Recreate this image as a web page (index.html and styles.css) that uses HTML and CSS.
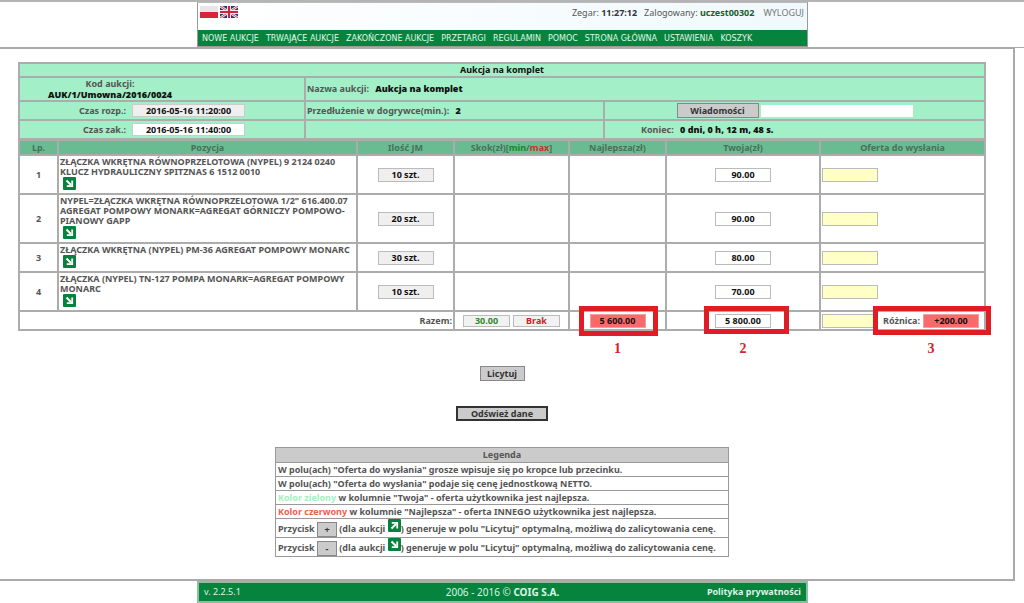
FILE: index.html
```html
<!DOCTYPE html>
<html lang="pl">
<head>
<meta charset="utf-8">
<title>Aukcja na komplet</title>
<link rel="stylesheet" href="styles.css">
</head>
<body>
<svg class="sprite" aria-hidden="true">
  <symbol id="arrow-down" viewBox="0 0 13 13">
    <rect width="13" height="13" rx="1" fill="#08813e"/>
    <path d="M3.5 3.5 L8 8" stroke="#fff" stroke-width="2" fill="none"/>
    <path d="M9.2 3.5 V9.2 H3.8" stroke="#fff" stroke-width="1.8" fill="none"/>
  </symbol>
  <symbol id="arrow-up" viewBox="0 0 13 13">
    <rect width="13" height="13" rx="1" fill="#08813e"/>
    <path d="M3.5 9.5 L8 5" stroke="#fff" stroke-width="2" fill="none"/>
    <path d="M3.8 3.8 H9.2 V9.4" stroke="#fff" stroke-width="1.8" fill="none"/>
  </symbol>
</svg>

<header class="top">
  <div class="top-box">
    <div class="top-bar">
      <div class="flags">
        <a href="#pl" aria-label="Polski"><svg class="flag" viewBox="0 0 18 12"><rect width="18" height="6" fill="#e9e6e6"/><rect y="6" width="18" height="6" fill="#d5263d"/></svg></a>
        <a href="#en" aria-label="English"><svg class="flag" viewBox="0 0 18 12"><rect width="18" height="12" fill="#2c3570"/><path d="M0 0 L18 12 M18 0 L0 12" stroke="#eee" stroke-width="2.6"/><path d="M0 0 L18 12 M18 0 L0 12" stroke="#cf3450" stroke-width="0.9"/><path d="M9 0 V12 M0 6 H18" stroke="#eee" stroke-width="4"/><path d="M9 0 V12 M0 6 H18" stroke="#cf2440" stroke-width="2.2"/></svg></a>
      </div>
      <div class="session">
        <span>Zegar: <b class="clock">11:27:12</b></span>
        <span>Zalogowany: <b class="user">uczest00302</b></span>
        <a class="logout" href="#logout">WYLOGUJ</a>
      </div>
    </div>
    <nav class="menu">
      <a href="#nowe">NOWE AUKCJE</a>
      <a href="#trwajace">TRWAJĄCE AUKCJE</a>
      <a href="#zakonczone">ZAKOŃCZONE AUKCJE</a>
      <a href="#przetargi">PRZETARGI</a>
      <a href="#regulamin">REGULAMIN</a>
      <a href="#pomoc">POMOC</a>
      <a href="#start">STRONA GŁÓWNA</a>
      <a href="#ustawienia">USTAWIENIA</a>
      <a href="#koszyk">KOSZYK</a>
    </nav>
  </div>
</header>

<main class="page">
  <table class="grid info">
    <colgroup><col class="i1"><col class="i2"><col class="i3"></colgroup>
    <tr class="title"><th colspan="3">Aukcja na komplet</th></tr>
    <tr class="name">
      <td><div class="code">Kod aukcji:<br><b>AUK/1/Umowna/2016/0024</b></div></td>
      <td colspan="2">Nazwa aukcji: <b class="val">Aukcja na komplet</b></td>
    </tr>
    <tr class="line">
      <td><div class="pair"><label for="start">Czas rozp.:</label><input id="start" class="date grey" readonly value="2016-05-16 11:20:00"></div></td>
      <td>Przedłużenie w dogrywce(min.): <b class="val">2</b></td>
      <td><div class="pair msg"><button class="btn wide" type="button">Wiadomości</button><input class="message" aria-label="Wiadomość"></div></td>
    </tr>
    <tr class="line">
      <td><div class="pair"><label for="end">Czas zak.:</label><input id="end" class="date" readonly value="2016-05-16 11:40:00"></div></td>
      <td></td>
      <td><div class="left-time">Koniec: <b class="val">0 dni, 0 h, 12 m, 48 s.</b></div></td>
    </tr>
  </table>

  <table class="grid items">
    <colgroup><col class="c1"><col class="c2"><col class="c3"><col class="c4"><col class="c5"><col class="c6"><col class="c7"></colgroup>
    <thead>
      <tr><th>Lp.</th><th>Pozycja</th><th>Ilość JM</th><th>Skok(zł)[<span class="min">min</span>/<span class="max">max</span>]</th><th>Najlepsza(zł)</th><th>Twoja(zł)</th><th>Oferta do wysłania</th></tr>
    </thead>
    <tbody>
      <tr>
        <td class="mid">1</td>
        <td class="desc">ZŁĄCZKA WKRĘTNA RÓWNOPRZELOTOWA (NYPEL) 9 2124 0240 KLUCZ HYDRAULICZNY SPITZNAS 6 1512 0010<svg class="icon"><use href="#arrow-down"/></svg></td>
        <td class="mid"><input class="box grey" readonly aria-label="Ilość 1" value="10 szt."></td><td></td><td></td>
        <td class="mid"><input class="box" readonly aria-label="Twoja 1" value="90.00"></td>
        <td><input class="box offer" aria-label="Oferta 1"></td>
      </tr>
      <tr>
        <td class="mid">2</td>
        <td class="desc">NYPEL=ZŁĄCZKA WKRĘTNA RÓWNOPRZELOTOWA 1/2" 616.400.07 AGREGAT POMPOWY MONARK=AGREGAT GÓRNICZY POMPOWO-PIANOWY GAPP<svg class="icon"><use href="#arrow-down"/></svg></td>
        <td class="mid"><input class="box grey" readonly aria-label="Ilość 2" value="20 szt."></td><td></td><td></td>
        <td class="mid"><input class="box" readonly aria-label="Twoja 2" value="90.00"></td>
        <td><input class="box offer" aria-label="Oferta 2"></td>
      </tr>
      <tr>
        <td class="mid">3</td>
        <td class="desc">ZŁĄCZKA WKRĘTNA (NYPEL) PM-36 AGREGAT POMPOWY MONARC<svg class="icon"><use href="#arrow-down"/></svg></td>
        <td class="mid"><input class="box grey" readonly aria-label="Ilość 3" value="30 szt."></td><td></td><td></td>
        <td class="mid"><input class="box" readonly aria-label="Twoja 3" value="80.00"></td>
        <td><input class="box offer" aria-label="Oferta 3"></td>
      </tr>
      <tr>
        <td class="mid">4</td>
        <td class="desc">ZŁĄCZKA (NYPEL) TN-127 POMPA MONARK=AGREGAT POMPOWY MONARC<svg class="icon"><use href="#arrow-down"/></svg></td>
        <td class="mid"><input class="box grey" readonly aria-label="Ilość 4" value="10 szt."></td><td></td><td></td>
        <td class="mid"><input class="box" readonly aria-label="Twoja 4" value="70.00"></td>
        <td><input class="box offer" aria-label="Oferta 4"></td>
      </tr>
      <tr class="sum">
        <td class="right" colspan="3">Razem:</td>
        <td><div class="steps"><input class="box step low" readonly aria-label="Skok min" value="30.00"><input class="box step high" readonly aria-label="Skok max" value="Brak"></div></td>
        <td class="mid"><div class="marked"><input class="box alert" readonly aria-label="Najlepsza razem" value="5 600.00"><span class="frame"></span><span class="mark">1</span></div></td>
        <td class="mid"><div class="marked"><input class="box" readonly aria-label="Twoja razem" value="5 800.00"><span class="frame frame-own"></span><span class="mark">2</span></div></td>
        <td><div class="total"><input class="box offer" aria-label="Oferta razem"><div class="marked diff"><label for="diff">Różnica:</label><input id="diff" class="box alert" readonly value="+200.00"><span class="frame frame-diff"></span><span class="mark">3</span></div></div></td>
      </tr>
    </tbody>
  </table>

  <button class="btn bid" type="button">Licytuj</button>
  <button class="btn refresh" type="button">Odśwież dane</button>

  <table class="legend">
    <thead><tr><th>Legenda</th></tr></thead>
    <tbody>
      <tr><td>W polu(ach) "Oferta do wysłania" grosze wpisuje się po kropce lub przecinku.</td></tr>
      <tr><td>W polu(ach) "Oferta do wysłania" podaje się cenę jednostkową NETTO.</td></tr>
      <tr><td><span class="green">Kolor zielony</span> w kolumnie "Twoja" - oferta użytkownika jest najlepsza.</td></tr>
      <tr><td><span class="red">Kolor czerwony</span> w kolumnie "Najlepsza" - oferta INNEGO użytkownika jest najlepsza.</td></tr>
      <tr class="tall"><td>Przycisk <button class="btn sign" type="button">+</button> (dla aukcji <svg class="icon"><use href="#arrow-up"/></svg>) generuje w polu "Licytuj" optymalną, możliwą do zalicytowania cenę.</td></tr>
      <tr class="tall"><td>Przycisk <button class="btn sign" type="button">-</button> (dla aukcji <svg class="icon"><use href="#arrow-down"/></svg>) generuje w polu "Licytuj" optymalną, możliwą do zalicytowania cenę.</td></tr>
    </tbody>
  </table>
</main>

<footer class="bottom">
  <div class="bottom-box">
    <span class="version">v. 2.2.5.1</span>
    <span class="copy">2006 - 2016 © <b>COIG S.A.</b></span>
    <a href="#polityka">Polityka prywatności</a>
  </div>
</footer>
</body>
</html>
```
FILE: styles.css
```css
* { box-sizing: border-box; }

body {
  margin: 0;
  background: #fff;
  color: #555;
  font: bold 9px/10px "Noto Sans", Tahoma, sans-serif;
}

a { color: inherit; text-decoration: none; }
.sprite { position: absolute; width: 0; height: 0; }
input, button { font: inherit; color: #111; margin: 0; border-radius: 0; }

/* Header */
.top { border-top: 2px solid #b4b4b4; border-bottom: 1px solid #aaa; padding-right: 19px; }
.top-box {
  max-width: 611px;
  margin: 0 auto;
  border: 1px solid #999;
  border-top-color: #bbb;
}
.top-bar {
  display: flex;
  justify-content: space-between;
  height: 27px;
  padding: 3px 3px 0 2px;
  background: linear-gradient(90deg, #fff, #f0f9fc);
  font-weight: normal;
}
.flags { display: flex; gap: 2px; }
.flag { display: block; width: 18px; height: 12px; }
.session { display: flex; gap: 7px; padding-top: 2px; }
.clock { color: #333; }
.user { color: #17602a; }
.logout { color: #777; padding-left: 2px; }
.menu {
  display: flex;
  gap: 7px;
  height: 16px;
  padding: 0 4px;
  background: #06843e;
  color: #e2f5e8;
  font: 8px/18px "DejaVu Sans", Verdana, sans-serif;
  white-space: nowrap;
}

/* Page frame */
.page {
  display: flex;
  flex-direction: column;
  align-items: center;
  margin-right: 9px;
  padding: 13px 27px 22px 18px;
  border: solid #aaa;
  border-width: 1px 2px 2px 0;
}

/* Auction tables */
.grid { width: 100%; table-layout: fixed; border-collapse: collapse; }
.grid th, .grid td { border: 2px solid #acacac; padding: 0 1px; }
.info { background: #a3efc8; }
.info b, .info th { color: #111; }
.i1 { width: 286px; }
.i2 { width: 299px; }
.title { height: 14px; }
.name { height: 24px; }
.line { height: 19px; }
.code { width: 130px; margin-left: 24px; line-height: 11px; text-align: center; white-space: nowrap; }
.val { margin-left: 4px; }
.pair { display: flex; align-items: center; gap: 6px; }
.pair label { flex: 0 0 105px; text-align: right; }
.date { width: 113px; height: 13px; border: 1px solid #ccc; padding: 0; background: #fff; text-align: center; }
.date.grey { background: #efefef; }
.msg { justify-content: center; gap: 2px; }
.message { width: 152px; height: 12px; border: 0; background: #fff; }
.left-time { padding-left: 35px; }

.items { margin-top: -1px; }
.c1 { width: 39px; }
.c2 { width: 299px; }
.c3 { width: 97px; }
.c4 { width: 115px; }
.c5 { width: 97px; }
.c6 { width: 154px; }
.items th { height: 15px; background: #69bc91; color: #49705c; }
.items .min { color: #128a22; }
.items .max { color: #cc3322; }
.mid { text-align: center; }
.items .right { text-align: right; }
.items .desc { padding: 1px 0 1px 1px; }
.icon { width: 13px; height: 13px; }
.desc .icon { display: block; margin: 0 0 2px 3px; }
.box { display: inline-block; width: 56px; height: 14px; padding: 0; border: 1px solid #bbb; background: #fff; text-align: center; vertical-align: middle; }
.grey { background: #efefef; }
.offer { background: #ffffc6; }
.alert { background: #f96b6b; border-color: #f0a0a0; }
.sum { height: 19px; }
.steps { display: flex; justify-content: center; gap: 3px; }
.step { width: 47px; height: 12px; background: #f2f2f2; }
.low { color: #2c8a2c; }
.high { color: #cc2222; }
.total { display: flex; justify-content: space-between; align-items: center; }

/* Numbered callouts over the totals */
.marked { position: relative; display: inline-flex; align-items: center; vertical-align: middle; }
.diff { gap: 3px; margin-right: 4px; }
.frame { position: absolute; inset: -8px -12px -8px -11px; border: 5px solid #e01c24; pointer-events: none; }
.frame-own { inset: -8px -18px -6px -11px; }
.frame-diff { inset: -8px -12px -7px -10px; }
.mark {
  position: absolute;
  top: 28px;
  left: 0;
  width: 100%;
  color: #d4222c;
  font: bold 14px/14px "Liberation Serif", serif;
  text-align: center;
}

/* Buttons */
.btn { padding: 0; border: 1px solid #888; background: #cbcbcb; color: #333; }
.wide { width: 82px; height: 15px; }
.bid { width: 45px; height: 15px; margin-top: 35px; }
.refresh { width: 92px; height: 15px; margin-top: 25px; border: 2px solid #333; }
.sign { width: 20px; height: 15px; }

/* Legend */
.legend { min-width: 454px; margin-top: 26px; border-collapse: collapse; white-space: nowrap; }
.legend th, .legend td { height: 14px; padding: 0 2px; border: 1px solid #999; }
.legend th { height: 15px; background: #cbcbcb; }
.legend .tall td { height: 19px; }
.legend .sign { vertical-align: middle; }
.green { color: #a3efc0; }
.red { color: #f0604c; }

/* Footer */
.bottom { padding-right: 19px; }
.bottom-box {
  display: grid;
  grid-template-columns: 1fr auto 1fr;
  align-items: center;
  max-width: 611px;
  height: 22px;
  margin: 0 auto;
  padding: 0 5px;
  border: 2px solid #8cbfa0;
  background: #06843e;
  color: #dff3e6;
}
.bottom-box a { text-align: right; }
.version { font-weight: normal; }
.copy { font-weight: normal; font-size: 10px; }
.copy b { font-weight: bold; }
```
